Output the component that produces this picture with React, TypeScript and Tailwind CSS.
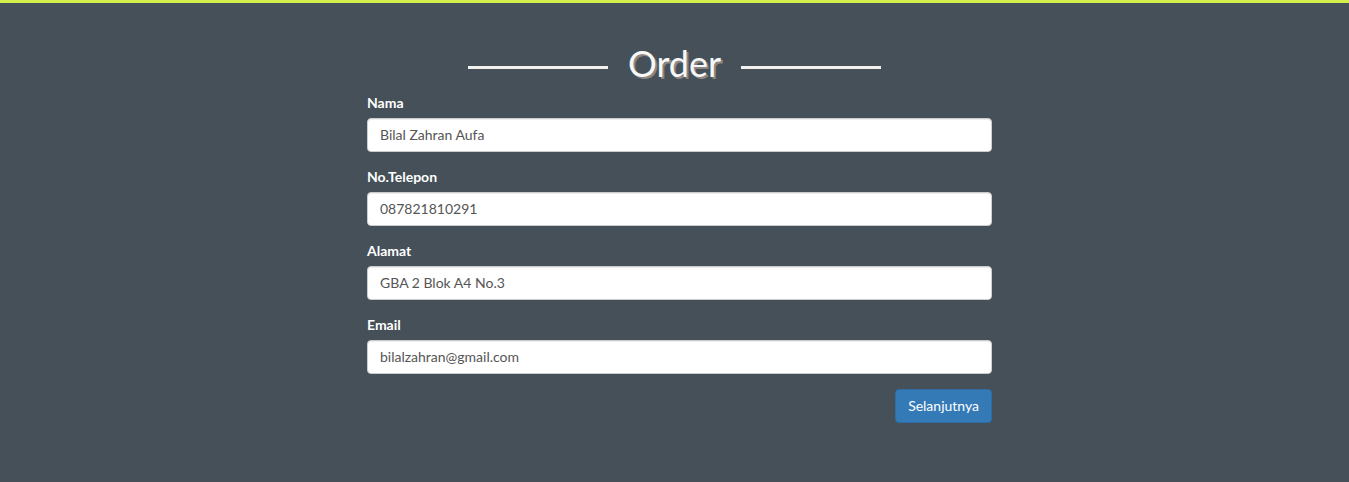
import React from "react";

const fields = [
  { label: "Nama", value: "Bilal Zahran Aufa", type: "text" },
  { label: "No.Telepon", value: "087821810291", type: "text" },
  { label: "Alamat", value: "GBA 2 Blok A4 No.3", type: "text" },
  { label: "Email", value: "bilalzahran@gmail.com", type: "email" },
];

export default function App() {
  return (
    <div className="min-h-screen bg-[#455058] font-['Lato','Liberation_Sans',sans-serif]">
      <div className="h-[3px] bg-[#d5f04c]"></div>

      <div className="pt-[40px] flex items-center justify-center gap-[20px]">
        <div className="mt-2 h-[3px] w-[140px] bg-[#f3f1ed]"></div>
        <h1 className="text-[36px] leading-[40px] text-[#f7f7f7] [text-shadow:2px_2px_0_#8d8680]">Order</h1>
        <div className="mt-2 h-[3px] w-[140px] bg-[#f3f1ed]"></div>
      </div>

      <form className="mx-auto mt-[10px] w-[635px] pl-[10px]">
        {fields.map((f, i) => (
          <div key={i} className="mb-[15px]">
            <label className="mb-[5px] block text-[14px] font-bold leading-[20px] text-white">{f.label}</label>
            <input
              type={f.type}
              defaultValue={f.value}
              className="block h-[34px] w-full rounded-[4px] border border-[#ccc] bg-white px-[12px] pb-[2px] text-[14px] text-[#555] shadow-[inset_0_1px_1px_rgba(0,0,0,0.075)] outline-none"
            />
          </div>
        ))}
        <div className="flex justify-end">
          <button
            type="button"
            className="h-[34px] rounded-[4px] border border-[#2e6da4] bg-[#337ab7] px-[12px] pb-[2px] text-[14px] text-white"
          >
            Selanjutnya
          </button>
        </div>
      </form>
    </div>
  );
}
